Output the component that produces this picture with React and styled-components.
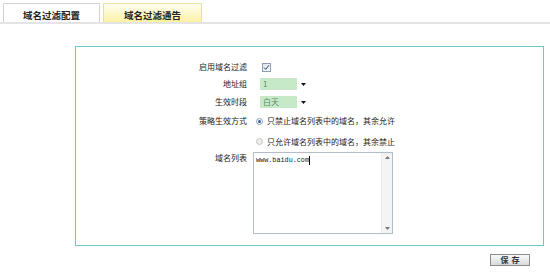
import React from 'react';
import styled, { createGlobalStyle } from 'styled-components';

const Global = createGlobalStyle`
  html, body { margin: 0; padding: 0; background: #fff; }
  body {
    font-family: "Noto Sans CJK SC", "Liberation Sans", sans-serif;
    width: 550px; height: 272px; overflow: hidden; color: #222;
  }
`;

const TabBar = styled.div`
  display: flex;
  gap: 3px;
  padding: 3px 0 0 3px;
  height: 19px;
  border-bottom: 2px solid #e4e4e4;
`;

const Tab = styled.div`
  width: ${p => p.$w}px;
  box-sizing: border-box;
  height: 19px;
  border: 1px solid ${p => (p.$active ? '#d2d2d2' : '#e8dfa6')};
  border-bottom: none;
  background: ${p => (p.$active ? '#fff' : 'linear-gradient(#fffef2, #fbf1a4)')};
  font-size: 9.5px;
  font-weight: bold;
  color: #222;
  text-align: center;
  line-height: 10px;
  padding-top: 6px;
`;

const Panel = styled.div`
  margin: 22px 0 0 75px;
  width: 469px;
  height: 200px;
  box-sizing: border-box;
  border: 1px solid #6cc6cc;
  padding-top: 12px;
`;

const Form = styled.div`
  display: grid;
  grid-template-columns: 171px 1fr;
  grid-template-rows: 16px 18px 18px 20px 21px 82px;
`;

const Label = styled.div`
  font-size: 8px;
  line-height: 10px;
  color: #1a1a1a;
  text-align: right;
  align-self: ${p => (p.$top ? 'start' : 'center')};
  padding-top: ${p => (p.$top ? '1px' : '0')};
`;

const Field = styled.div`
  display: flex;
  align-items: ${p => (p.$top ? 'flex-start' : 'center')};
  padding-left: ${p => p.$pl}px;
  font-size: 8px;
  line-height: 10px;
  color: #1a1a1a;
`;

const Select = styled.div`
  display: flex;
  width: 50px;
  height: 12px;
  box-sizing: border-box;
`;

const SelectValue = styled.div`
  flex: 1;
  background: #c6eac8;
  color: #5b8a66;
  font-size: 8px;
  line-height: 12px;
  padding-left: 3px;
`;

const SelectArrow = styled.div`
  width: 13px;
  display: flex;
  align-items: center;
  justify-content: center;
`;

const RadioCircle = styled.span`
  width: 7px;
  height: 7px;
  box-sizing: border-box;
  border-radius: 50%;
  border: 1px solid ${p => (p.$on ? '#8a9bb0' : '#c4c4c4')};
  background: ${p => (p.$on ? '#fff' : '#eee')};
  display: flex;
  align-items: center;
  justify-content: center;
  margin-right: 4px;
  &::after {
    content: '';
    display: ${p => (p.$on ? 'block' : 'none')};
    width: 3px;
    height: 3px;
    border-radius: 50%;
    background: #2b5ba4;
  }
`;

const TextBox = styled.div`
  width: 140px;
  height: 82px;
  box-sizing: border-box;
  border: 1px solid #b4bcc6;
  display: flex;
  background: #fff;
`;

const TextContent = styled.div`
  flex: 1;
  padding: 3px 2px;
  font-family: "Liberation Mono", monospace;
  font-size: 6.8px;
  line-height: 9px;
  color: #222;
  display: flex;
  align-items: flex-start;
`;

const Caret = styled.span`
  display: inline-block;
  width: 1px;
  height: 9px;
  background: #000;
`;

const ScrollBar = styled.div`
  width: 10px;
  background: #f4f4f4;
  border-left: 1px solid #ececec;
  display: flex;
  flex-direction: column;
  justify-content: space-between;
  align-items: center;
  padding: 3px 0;
`;

const Footer = styled.div`
  display: flex;
  justify-content: flex-end;
  padding: 8px 20px 0 0;
`;

const SaveButton = styled.button`
  width: 40px;
  height: 12px;
  box-sizing: border-box;
  border: 1px solid #8c8c8c;
  background: linear-gradient(#fafafa, #d9d9d9);
  font-family: "Noto Sans CJK SC", sans-serif;
  font-size: 8px;
  line-height: 10px;
  font-weight: bold;
  color: #333;
  padding: 0;
  word-spacing: 1px;
`;

const Tri = ({ up }) => (
  <svg width="5" height="3" viewBox="0 0 5 3">
    <path d={up ? 'M0 3 L2.5 0 L5 3 Z' : 'M0 0 L5 0 L2.5 3 Z'} fill="#777" />
  </svg>
);

const Check = () => (
  <svg width="9" height="9" viewBox="0 0 9 9">
    <defs>
      <linearGradient id="cb" x1="0" y1="0" x2="1" y2="1">
        <stop offset="0" stopColor="#dfe3ea" />
        <stop offset="1" stopColor="#fafbfd" />
      </linearGradient>
    </defs>
    <rect x="0.5" y="0.5" width="8" height="8" fill="url(#cb)" stroke="#8d9fb6" />
    <path d="M2.2 4.6 L3.8 6.4 L6.9 2.3" fill="none" stroke="#2c4566" strokeWidth="1" />
  </svg>
);

const SelectBox = ({ value }) => (
  <Select>
    <SelectValue>{value}</SelectValue>
    <SelectArrow>
      <svg width="5" height="3" viewBox="0 0 5 3">
        <path d="M0 0 L5 0 L2.5 3 Z" fill="#111" />
      </svg>
    </SelectArrow>
  </Select>
);

export default function App() {
  return (
    <>
      <Global />
      <TabBar>
        <Tab $w={97} $active>域名过滤配置</Tab>
        <Tab $w={99}>域名过滤通告</Tab>
      </TabBar>
      <Panel>
        <Form>
          <Label>启用域名过滤</Label>
          <Field $pl={15}><Check /></Field>

          <Label>地址组</Label>
          <Field $pl={13}><SelectBox value="1" /></Field>

          <Label>生效时段</Label>
          <Field $pl={13}><SelectBox value="白天" /></Field>

          <Label>策略生效方式</Label>
          <Field $pl={9}><RadioCircle $on />只禁止域名列表中的域名，其余允许</Field>

          <Label />
          <Field $pl={9}><RadioCircle />只允许域名列表中的域名，其余禁止</Field>

          <Label $top>域名列表</Label>
          <Field $pl={6} $top>
            <TextBox>
              <TextContent>www.baidu.com<Caret /></TextContent>
              <ScrollBar>
                <Tri up />
                <Tri />
              </ScrollBar>
            </TextBox>
          </Field>
        </Form>
      </Panel>
      <Footer>
        <SaveButton>保 存</SaveButton>
      </Footer>
    </>
  );
}
